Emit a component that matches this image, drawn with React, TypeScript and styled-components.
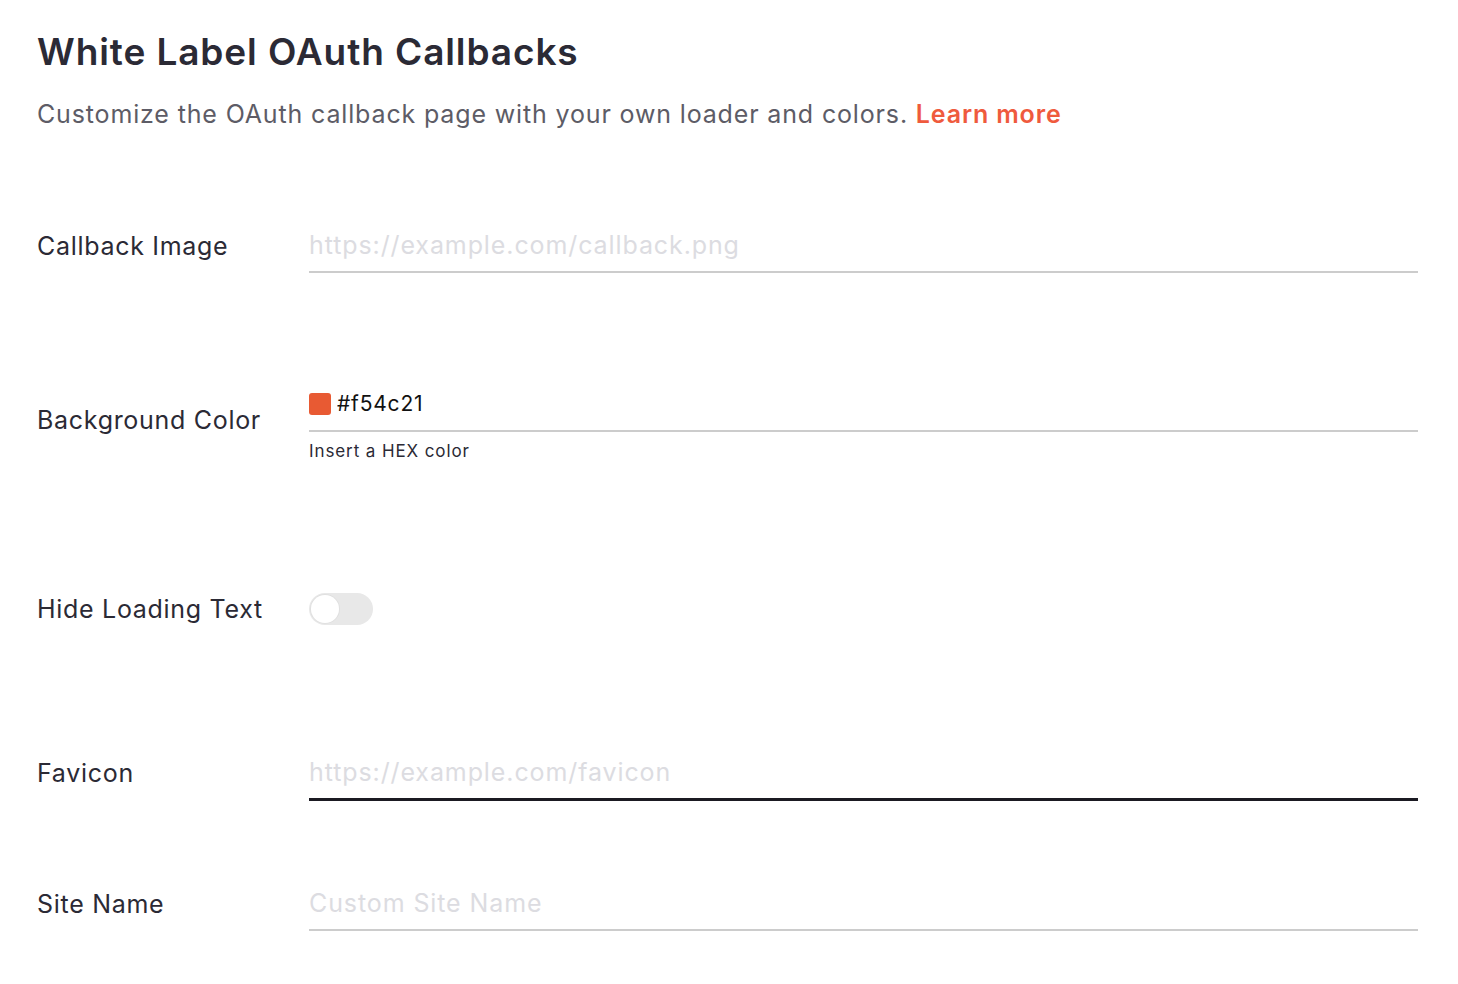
import styled, { createGlobalStyle } from 'styled-components';

const GlobalStyle = createGlobalStyle`
  body {
    margin: 0;
    background: #ffffff;
    font-family: Inter, "Noto Sans", sans-serif;
  }
`;

const Page = styled.main`
  padding: 28px 40px 40px 37px;
`;

const Title = styled.h1`
  margin: 0;
  font-size: 37px;
  font-weight: 600;
  line-height: 48px;
  color: #2b2a35;
  letter-spacing: 0.9px;
`;

const Subtitle = styled.p`
  margin: 22px 0 0;
  font-size: 25px;
  line-height: 32px;
  color: #5d5c66;
  letter-spacing: 0.85px;
`;

const LearnMore = styled.a`
  color: #ef5a3d;
  font-weight: 600;
  text-decoration: none;
`;

const Form = styled.div`
  display: flex;
  flex-direction: column;
  margin-top: 88px;
`;

const Row = styled.div<{ $top?: number }>`
  display: grid;
  grid-template-columns: 272px 1fr;
  align-items: center;
  margin-top: ${(p) => p.$top ?? 0}px;
`;

const Label = styled.label`
  font-size: 25px;
  color: #2b2a35;
  letter-spacing: 0.7px;
`;

const Field = styled.div`
  display: flex;
  flex-direction: column;
`;

const InputWrap = styled.div<{ $active?: boolean }>`
  display: flex;
  align-items: center;
  gap: 6px;
  height: 53px;
  border-bottom: ${(p) => (p.$active ? '3px solid #1b1a22' : '2px solid #cccccc')};
`;

const Input = styled.input<{ $small?: boolean }>`
  flex: 1;
  border: none;
  outline: none;
  padding: 0;
  background: transparent;
  font-family: inherit;
  font-size: ${(p) => (p.$small ? 21 : 25)}px;
  letter-spacing: ${(p) => (p.$small ? 0.8 : 0.9)}px;
  color: #111111;

  &::placeholder {
    color: #dcdce1;
  }
`;

const Swatch = styled.span<{ $color: string }>`
  width: 22px;
  height: 22px;
  border-radius: 3px;
  background: ${(p) => p.$color};
  flex-shrink: 0;
`;

const Helper = styled.div`
  margin-top: 7px;
  font-size: 17px;
  line-height: 24px;
  color: #2b2a35;
  letter-spacing: 0.9px;
`;

const Toggle = styled.button`
  width: 64px;
  height: 32px;
  padding: 2px;
  border: none;
  border-radius: 16px;
  background: #e8e8e8;
  display: flex;
  align-items: center;
  cursor: pointer;
`;

const Knob = styled.span`
  width: 28px;
  height: 28px;
  border-radius: 50%;
  background: #ffffff;
  box-shadow: 0 0 0 1px #e0e0e0;
`;

export default function App() {
  return (
    <>
      <GlobalStyle />
      <Page>
        <Title>White Label OAuth Callbacks</Title>
        <Subtitle>
          Customize the OAuth callback page with your own loader and colors.{' '}
          <LearnMore href="#">Learn more</LearnMore>
        </Subtitle>
        <Form>
          <Row>
            <Label>Callback Image</Label>
            <Field>
              <InputWrap>
                <Input placeholder="https://example.com/callback.png" />
              </InputWrap>
            </Field>
          </Row>
          <Row $top={104}>
            <Label>Background Color</Label>
            <Field>
              <InputWrap>
                <Swatch $color="#e85a33" />
                <Input $small defaultValue="#f54c21" />
              </InputWrap>
              <Helper>Insert a HEX color</Helper>
            </Field>
          </Row>
          <Row $top={130}>
            <Label>Hide Loading Text</Label>
            <Field>
              <Toggle aria-label="Hide Loading Text">
                <Knob />
              </Toggle>
            </Field>
          </Row>
          <Row $top={120}>
            <Label>Favicon</Label>
            <Field>
              <InputWrap $active>
                <Input placeholder="https://example.com/favicon" />
              </InputWrap>
            </Field>
          </Row>
          <Row $top={75}>
            <Label>Site Name</Label>
            <Field>
              <InputWrap>
                <Input placeholder="Custom Site Name" />
              </InputWrap>
            </Field>
          </Row>
        </Form>
      </Page>
    </>
  );
}
